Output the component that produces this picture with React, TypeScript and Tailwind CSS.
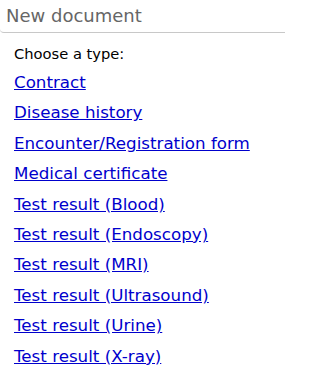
import React from 'react'

const types = [
  'Contract',
  'Disease history',
  'Encounter/Registration form',
  'Medical certificate',
  'Test result (Blood)',
  'Test result (Endoscopy)',
  'Test result (MRI)',
  'Test result (Ultrasound)',
  'Test result (Urine)',
  'Test result (X-ray)',
]

export default function App() {
  return (
    <div className="w-[285px] h-[385px] overflow-hidden bg-white font-['DejaVu_Sans',sans-serif]">
      <div className="h-[33px] border-b border-[#c8c8c8] rounded-bl-sm pl-[6px] pt-[4px]">
        <h1 className="text-[18px] leading-[24px] text-[#666666]">New document</h1>
      </div>
      <div className="pl-[14px] pt-[11px]">
        <p className="text-[14.7px] leading-[20px] text-black">Choose a type:</p>
        <ul className="mt-[3px] flex flex-col">
          {types.map((t) => (
            <li key={t} className="text-[16.7px] leading-[30.4px]">
              <a href="#" className="text-[#0000cc] underline">
                {t}
              </a>
            </li>
          ))}
        </ul>
      </div>
    </div>
  )
}
